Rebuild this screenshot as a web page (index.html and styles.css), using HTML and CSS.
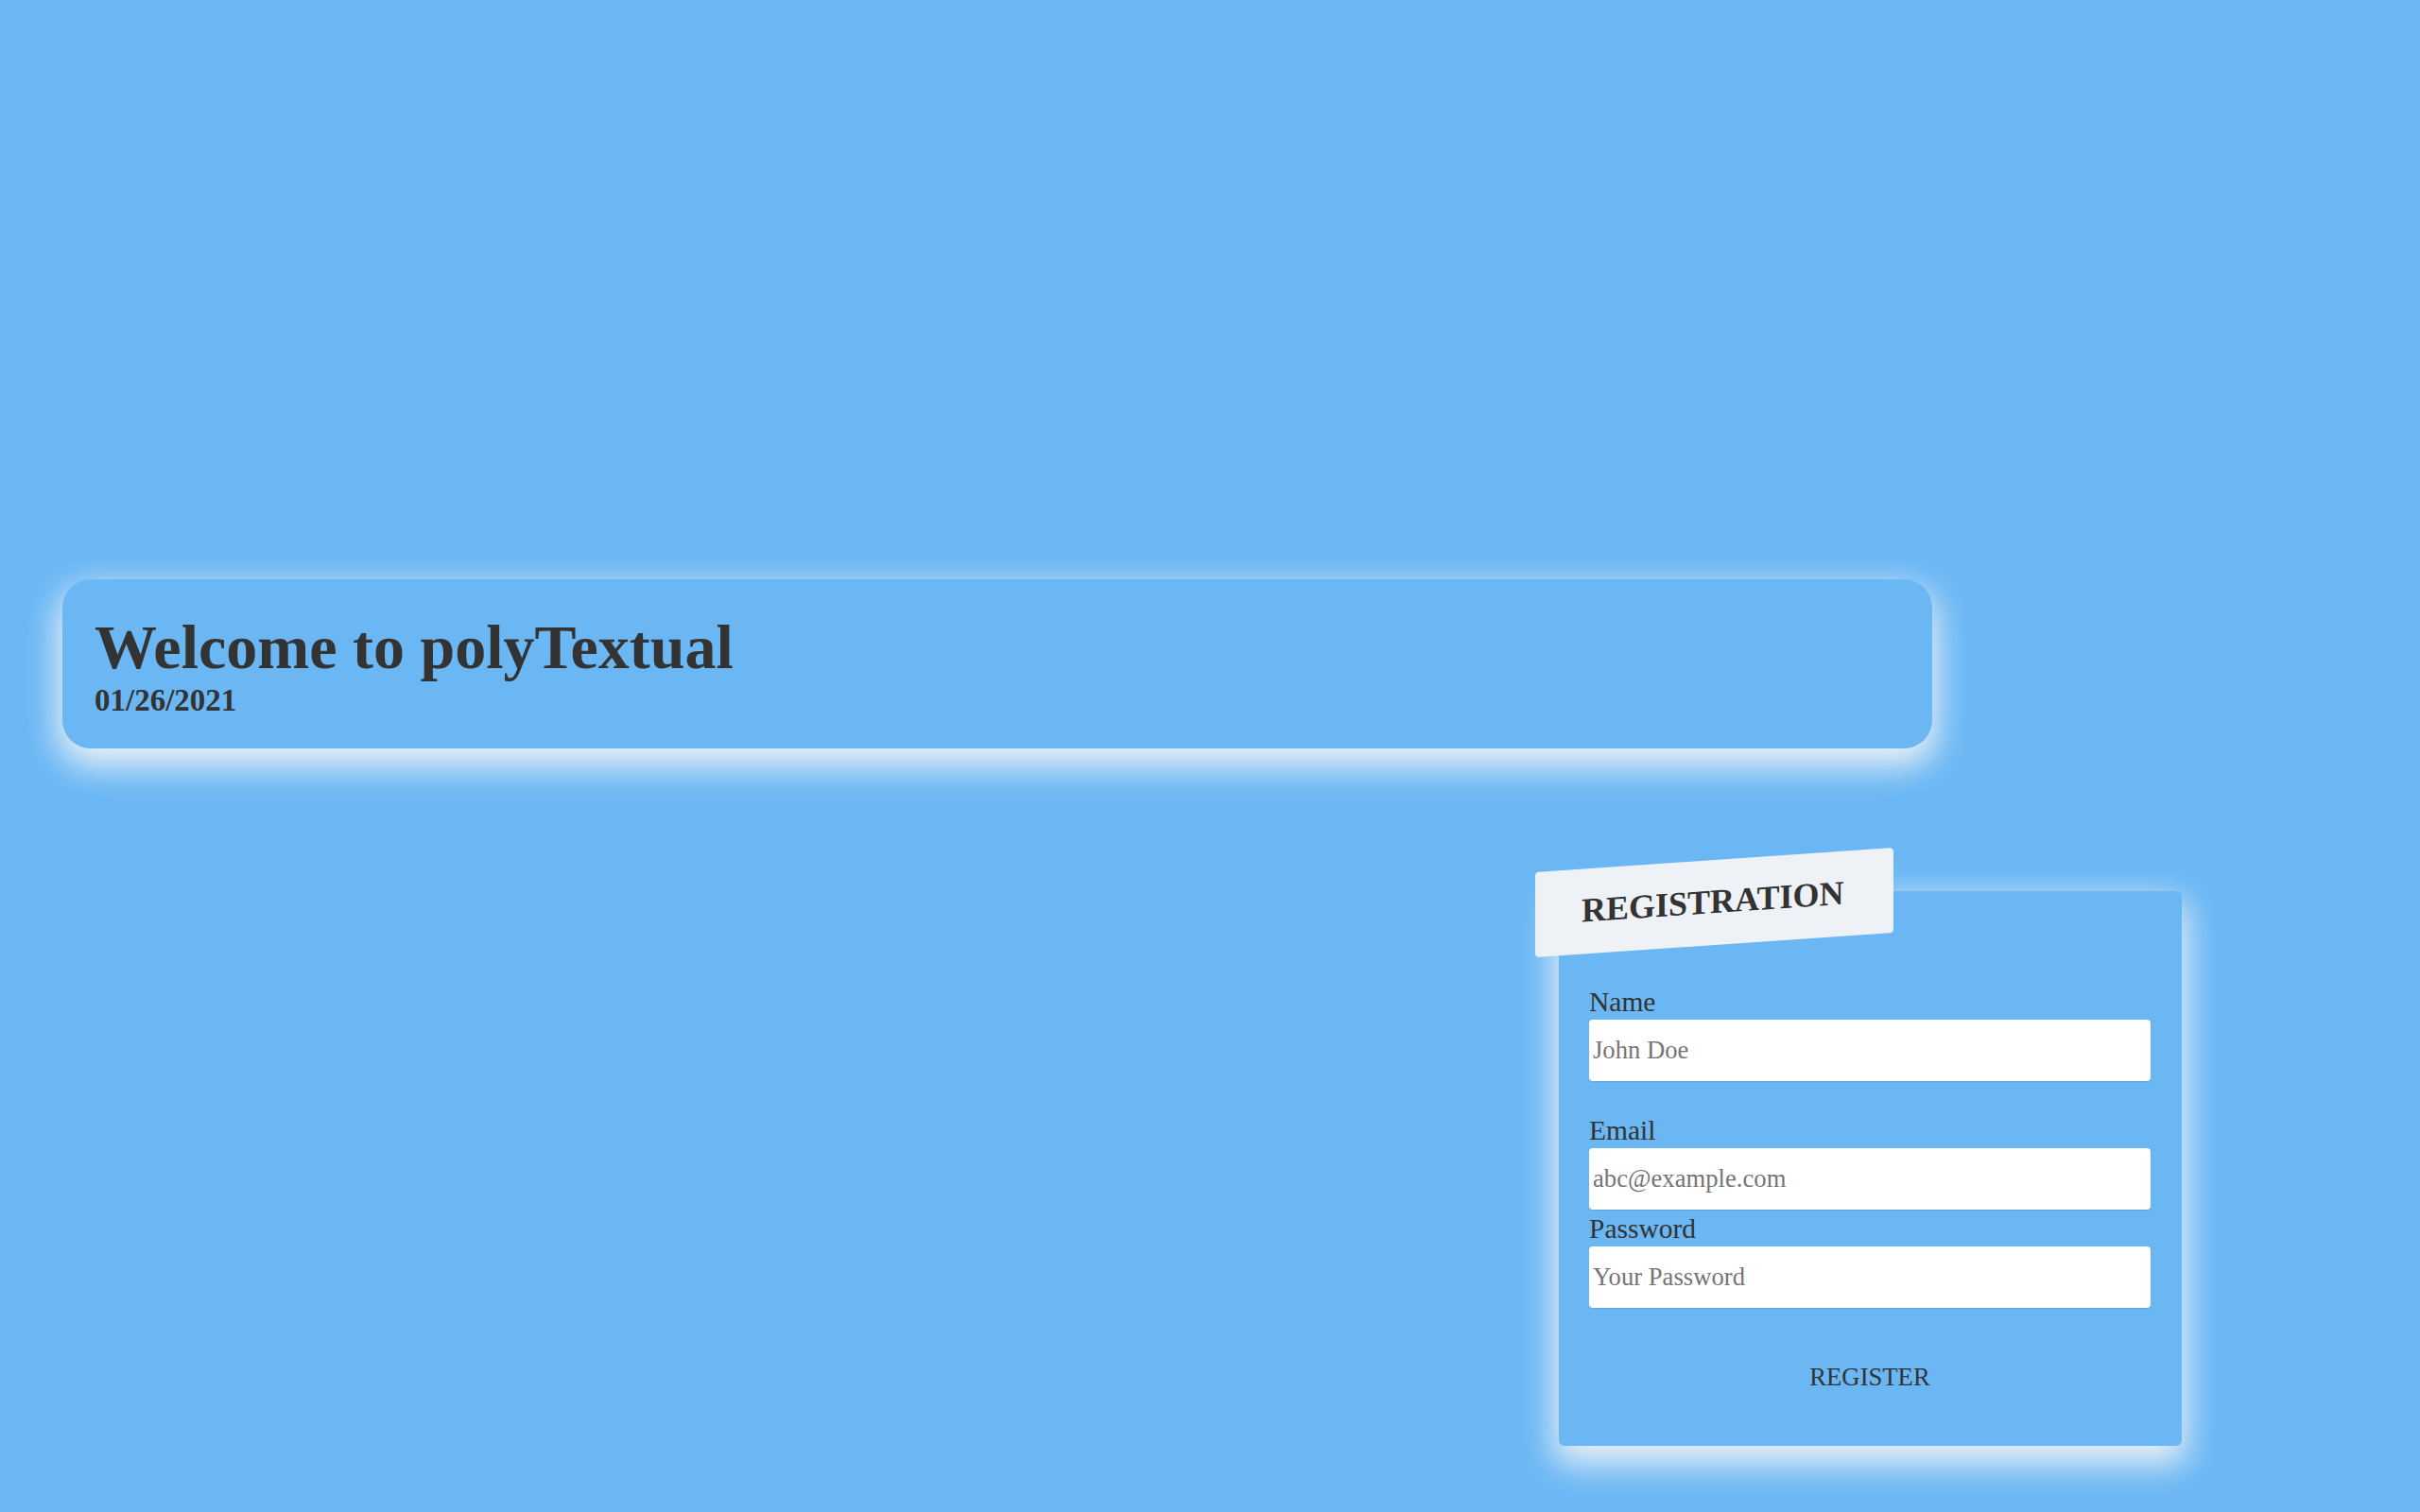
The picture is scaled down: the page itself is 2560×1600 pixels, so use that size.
FILE: index.html
```html
<!DOCTYPE html>
<html lang="en">
<head>
<meta charset="utf-8">
<title>polyTextual</title>
<link rel="stylesheet" href="styles.css">
</head>
<body>
<main class="page">
  <header class="welcome">
    <h1 class="welcome-title">Welcome to polyTextual</h1>
    <div class="welcome-date">01/26/2021</div>
  </header>
  <section class="reg-row">
    <form class="reg-card">
      <h2 class="reg-tag">REGISTRATION</h2>
      <div class="field field-first">
        <label class="field-label" for="name">Name</label>
        <input class="field-input" id="name" type="text" placeholder="John Doe">
      </div>
      <div class="field">
        <label class="field-label" for="email">Email</label>
        <input class="field-input" id="email" type="email" placeholder="abc@example.com">
      </div>
      <div class="field">
        <label class="field-label" for="password">Password</label>
        <input class="field-input" id="password" type="password" placeholder="Your Password">
      </div>
      <button class="reg-button" type="button">REGISTER</button>
    </form>
  </section>
</main>
</body>
</html>
```
FILE: styles.css
```css
html, body {
  margin: 0;
  padding: 0;
}
body {
  background: #6ab7f4;
  color: #333333;
  font-family: "Liberation Serif", "Times New Roman", serif;
  min-height: 1600px;
}
.page {
  padding: 613px 0 0 66px;
  display: flex;
  flex-direction: column;
}
.welcome {
  width: 1978px;
  box-sizing: border-box;
  padding: 34px 34px 32px;
  border-radius: 30px;
  background: #6ab7f4;
  box-shadow: 0 14px 36px 5px #eef2f7;
}
.welcome-title {
  margin: 0;
  font-size: 66px;
  line-height: 76px;
  font-weight: bold;
}
.welcome-date {
  font-size: 33px;
  line-height: 37px;
  font-weight: bold;
}
.reg-row {
  display: flex;
  margin-top: 151px;
  padding-left: 1583px;
}
.reg-card {
  position: relative;
  width: 659px;
  box-sizing: border-box;
  padding: 100px 33px 32px 32px;
  border-radius: 6px;
  background: #6ab7f4;
  box-shadow: 0 14px 36px 5px #eef2f7;
  display: flex;
  flex-direction: column;
}
.reg-tag {
  position: absolute;
  left: -25px;
  top: -33px;
  margin: 0;
  box-sizing: border-box;
  width: 379px;
  height: 90px;
  padding: 24px 0 0 49px;
  background: #eef2f6;
  border-radius: 4px;
  font-size: 36px;
  line-height: 41px;
  font-weight: bold;
  white-space: nowrap;
  transform: skewY(-3.9deg);
}
.field {
  display: flex;
  flex-direction: column;
}
.field-first {
  margin-bottom: 32px;
}
.field + .field {
  margin-top: 3px;
}
.field-label {
  font-size: 29.5px;
  line-height: 34px;
}
.field-input {
  margin: 2px 0 0;
  height: 65px;
  box-sizing: border-box;
  border: none;
  border-radius: 4px;
  background: #ffffff;
  box-shadow: 0 1px 1px rgba(0, 0, 0, 0.1);
  padding: 0 4px;
  font-family: "Liberation Serif", "Times New Roman", serif;
  font-size: 26.67px;
  color: #333333;
  outline: none;
}
.field-input::placeholder {
  color: #757575;
}
.reg-button {
  margin-top: 32px;
  padding: 26px 0;
  border: none;
  background: transparent;
  color: #333333;
  font-family: "Liberation Serif", "Times New Roman", serif;
  font-size: 26.67px;
  line-height: 30px;
  cursor: pointer;
}
```
